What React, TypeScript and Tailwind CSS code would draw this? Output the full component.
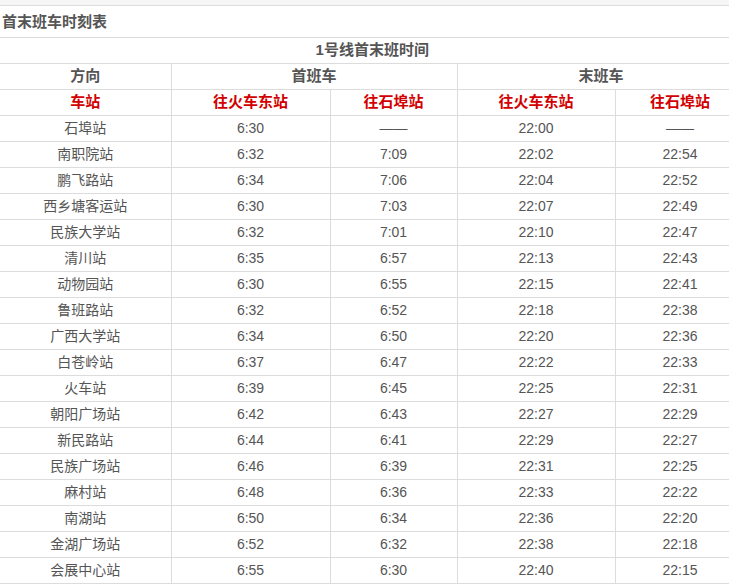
const rows: [string, string, string, string, string][] = [
  ["石埠站", "6:30", "——", "22:00", "——"],
  ["南职院站", "6:32", "7:09", "22:02", "22:54"],
  ["鹏飞路站", "6:34", "7:06", "22:04", "22:52"],
  ["西乡塘客运站", "6:30", "7:03", "22:07", "22:49"],
  ["民族大学站", "6:32", "7:01", "22:10", "22:47"],
  ["清川站", "6:35", "6:57", "22:13", "22:43"],
  ["动物园站", "6:30", "6:55", "22:15", "22:41"],
  ["鲁班路站", "6:32", "6:52", "22:18", "22:38"],
  ["广西大学站", "6:34", "6:50", "22:20", "22:36"],
  ["白苍岭站", "6:37", "6:47", "22:22", "22:33"],
  ["火车站", "6:39", "6:45", "22:25", "22:31"],
  ["朝阳广场站", "6:42", "6:43", "22:27", "22:29"],
  ["新民路站", "6:44", "6:41", "22:29", "22:27"],
  ["民族广场站", "6:46", "6:39", "22:31", "22:25"],
  ["麻村站", "6:48", "6:36", "22:33", "22:22"],
  ["南湖站", "6:50", "6:34", "22:36", "22:20"],
  ["金湖广场站", "6:52", "6:32", "22:38", "22:18"],
  ["会展中心站", "6:55", "6:30", "22:40", "22:15"],
];

const cell = "border border-[#dcdcdc] h-[26px] p-0 text-center align-middle";
const head = cell + " font-bold text-[15px]";

export default function App() {
  return (
    <div
      className="w-[729px] h-[586px] overflow-hidden bg-white text-[14px] text-[#555]"
      style={{ fontFamily: '"Liberation Sans", Arial, "Noto Sans CJK SC", sans-serif' }}
    >
      <div className="h-[6px] bg-[#f6f6f6] border-b border-[#dcdcdc]" />
      <div className="h-[32px] flex items-center pl-[2px] font-bold text-[15px] border-b border-[#dcdcdc] leading-none">
        首末班车时刻表
      </div>
      <table className="w-[745px] border-collapse table-fixed -mt-px">
        <colgroup>
          <col className="w-[171px]" />
          <col className="w-[159px]" />
          <col className="w-[127px]" />
          <col className="w-[158px]" />
          <col className="w-[130px]" />
        </colgroup>
        <tbody>
          <tr>
            <td colSpan={5} className={head + " border-l-0"}>1号线首末班时间</td>
          </tr>
          <tr>
            <td className={head + " border-l-0"}>方向</td>
            <td colSpan={2} className={head}>首班车</td>
            <td colSpan={2} className={head}>末班车</td>
          </tr>
          <tr className="text-[#d20000]">
            <td className={head + " border-l-0"}>车站</td>
            <td className={head}>往火车东站</td>
            <td className={head}>往石埠站</td>
            <td className={head}>往火车东站</td>
            <td className={head}>往石埠站</td>
          </tr>
          {rows.map((r) => (
            <tr key={r[0]}>
              {r.map((v, i) => (
                <td key={i} className={cell + (i === 0 ? " border-l-0" : "")}>{v}</td>
              ))}
            </tr>
          ))}
        </tbody>
      </table>
    </div>
  );
}
